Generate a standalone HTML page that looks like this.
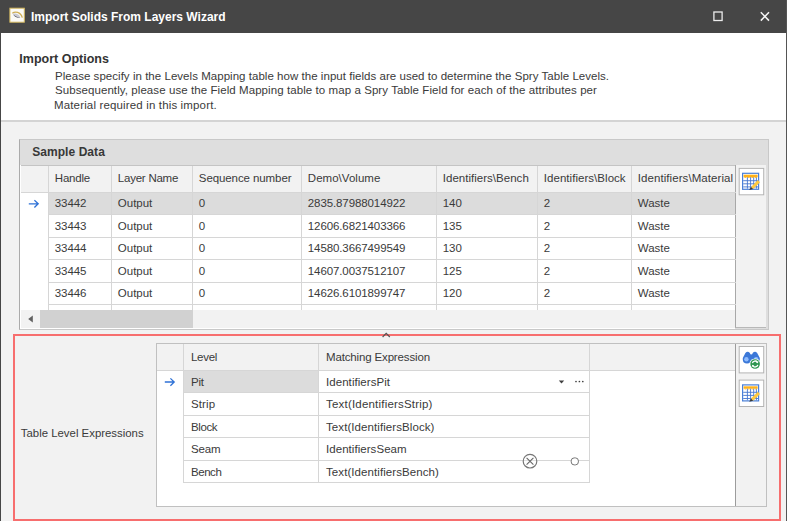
<!DOCTYPE html>
<html><head><meta charset="utf-8"><title>Import Solids From Layers Wizard</title>
<style>
html,body{margin:0;padding:0;}
body{width:789px;height:521px;overflow:hidden;background:#f2f2f2;position:relative;font-family:"Liberation Sans",sans-serif;font-size:11.5px;color:#3a3a3a;}
div,span{position:absolute;box-sizing:border-box;white-space:nowrap;}
.t{line-height:14px;height:14px;}
.b{font-weight:bold;}
#titlebar{left:0;top:0;width:787px;height:33px;background:#464646;}
#lb{left:0;top:0;width:1.2px;height:521px;background:#464646;}
#rb{left:786px;top:0;width:1.3px;height:521px;background:#555;}
#rw{left:787.4px;top:0;width:2px;height:521px;background:#fff;}
#head{left:1px;top:33px;width:785px;height:88px;background:#fff;}
#sep{left:1px;top:120px;width:785px;height:2px;background:#d4d4d4;}
.hl{background:#d6d6d6;height:1px;}
.vl{background:#d6d6d6;width:1px;}
.cell{height:14px;line-height:14px;}
</style></head><body>
<div id="titlebar"></div>
<div id="lb"></div><div id="rb"></div><div id="rw"></div>
<div id="head"></div>
<div id="sep"></div>

<span class="t b" id="ttl" style="left:31px;top:9.7px;font-size:12px;color:#fff;">Import Solids From Layers Wizard</span>

<span class="t b" id="io" style="left:19.3px;top:51.6px;font-size:12.5px;color:#333;">Import Options</span>
<span class="t" id="l1" style="left:55px;top:68.8px;letter-spacing:0.036px;">Please specify in the Levels Mapping table how the input fields are used to determine the Spry Table Levels.</span>
<span class="t" id="l2" style="left:55px;top:83.3px;letter-spacing:0.076px;">Subsequently, please use the Field Mapping table to map a Spry Table Field for each of the attributes per</span>
<span class="t" id="l3" style="left:54px;top:98px;letter-spacing:0.15px;">Material required in this import.</span>

<!-- Sample data group -->
<div id="grp" style="left:19px;top:139.2px;width:749.6px;height:190.6px;background:#dedede;border:1.2px solid #c8c8c8;border-left-color:#ababab;"></div>
<span class="t b" id="sd" style="left:32.2px;top:144.5px;font-size:12px;letter-spacing:0.06px;color:#383838;">Sample Data</span>
<div id="g1pad" style="left:20.2px;top:165px;width:715.3px;height:164.2px;background:#fff;"></div>
<div id="g1" style="left:21px;top:165px;width:714.5px;height:144.5px;background:#fff;"></div>
<div id="g1h" style="left:21px;top:165px;width:714.5px;height:27px;background:#f2f2f2;border-top:1px solid #c4c4c4;"></div>
<div id="g1sel" style="left:48px;top:192px;width:687.5px;height:22.5px;background:#dcdcdc;"></div>
<div id="g1sb" style="left:21px;top:309.5px;width:714.5px;height:18.5px;background:#f2f2f2;"></div>
<div id="g1thumb" style="left:40px;top:309.5px;width:152.6px;height:18.3px;background:#d1d1d1;"></div>
<div id="side1" style="left:735px;top:165px;width:30.8px;height:163px;background:#f2f2f2;border-left:1px solid #a8a8a8;border-bottom:1px solid #b8b8b8;"></div>

<div id="cont1">
<div class="vl" style="left:48px;top:166px;height:143.5px;"></div>
<div class="vl" style="left:111px;top:166px;height:143.5px;"></div>
<div class="vl" style="left:192px;top:166px;height:143.5px;"></div>
<div class="vl" style="left:301px;top:166px;height:143.5px;"></div>
<div class="vl" style="left:436px;top:166px;height:143.5px;"></div>
<div class="vl" style="left:537px;top:166px;height:143.5px;"></div>
<div class="vl" style="left:631px;top:166px;height:143.5px;"></div>
<div class="hl" style="left:21px;top:191.7px;width:714.5px;"></div>
<div class="hl" style="left:48px;top:214px;width:687.5px;"></div>
<div class="hl" style="left:48px;top:236.5px;width:687.5px;"></div>
<div class="hl" style="left:48px;top:259px;width:687.5px;"></div>
<div class="hl" style="left:48px;top:281.5px;width:687.5px;"></div>
<div class="hl" style="left:48px;top:304px;width:687.5px;"></div>
<span class="t" id="h0" style="left:54.8px;top:171.2px;letter-spacing:-0.2px;">Handle</span>
<span class="t" id="h1" style="left:117.8px;top:171.2px;letter-spacing:-0.23px;">Layer Name</span>
<span class="t" id="h2" style="left:198.8px;top:171.2px;letter-spacing:-0.09px;">Sequence number</span>
<span class="t" id="h3" style="left:307.8px;top:171.2px;letter-spacing:0.03px;">Demo\Volume</span>
<span class="t" id="h4" style="left:442.8px;top:171.2px;letter-spacing:0.02px;">Identifiers\Bench</span>
<span class="t" id="h5" style="left:543.8px;top:171.2px;letter-spacing:0.04px;">Identifiers\Block</span>
<span class="t" id="h6" style="left:637.8px;top:171.2px;letter-spacing:0.07px;">Identifiers\Material</span>
<span class="t" id="r0c0" style="left:54.8px;top:196.4px;letter-spacing:-0.1px;">33442</span>
<span class="t" id="r0c1" style="left:117.8px;top:196.4px;">Output</span>
<span class="t" id="r0c2" style="left:198.8px;top:196.4px;letter-spacing:-0.1px;">0</span>
<span class="t" id="r0c3" style="left:307.8px;top:196.4px;letter-spacing:-0.1px;">2835.87988014922</span>
<span class="t" id="r0c4" style="left:442.8px;top:196.4px;letter-spacing:-0.1px;">140</span>
<span class="t" id="r0c5" style="left:543.8px;top:196.4px;letter-spacing:-0.1px;">2</span>
<span class="t" id="r0c6" style="left:637.8px;top:196.4px;">Waste</span>
<span class="t" id="r1c0" style="left:54.8px;top:218.9px;letter-spacing:-0.1px;">33443</span>
<span class="t" id="r1c1" style="left:117.8px;top:218.9px;">Output</span>
<span class="t" id="r1c2" style="left:198.8px;top:218.9px;letter-spacing:-0.1px;">0</span>
<span class="t" id="r1c3" style="left:307.8px;top:218.9px;letter-spacing:-0.1px;">12606.6821403366</span>
<span class="t" id="r1c4" style="left:442.8px;top:218.9px;letter-spacing:-0.1px;">135</span>
<span class="t" id="r1c5" style="left:543.8px;top:218.9px;letter-spacing:-0.1px;">2</span>
<span class="t" id="r1c6" style="left:637.8px;top:218.9px;">Waste</span>
<span class="t" id="r2c0" style="left:54.8px;top:241.4px;letter-spacing:-0.1px;">33444</span>
<span class="t" id="r2c1" style="left:117.8px;top:241.4px;">Output</span>
<span class="t" id="r2c2" style="left:198.8px;top:241.4px;letter-spacing:-0.1px;">0</span>
<span class="t" id="r2c3" style="left:307.8px;top:241.4px;letter-spacing:-0.1px;">14580.3667499549</span>
<span class="t" id="r2c4" style="left:442.8px;top:241.4px;letter-spacing:-0.1px;">130</span>
<span class="t" id="r2c5" style="left:543.8px;top:241.4px;letter-spacing:-0.1px;">2</span>
<span class="t" id="r2c6" style="left:637.8px;top:241.4px;">Waste</span>
<span class="t" id="r3c0" style="left:54.8px;top:263.9px;letter-spacing:-0.1px;">33445</span>
<span class="t" id="r3c1" style="left:117.8px;top:263.9px;">Output</span>
<span class="t" id="r3c2" style="left:198.8px;top:263.9px;letter-spacing:-0.1px;">0</span>
<span class="t" id="r3c3" style="left:307.8px;top:263.9px;letter-spacing:-0.1px;">14607.0037512107</span>
<span class="t" id="r3c4" style="left:442.8px;top:263.9px;letter-spacing:-0.1px;">125</span>
<span class="t" id="r3c5" style="left:543.8px;top:263.9px;letter-spacing:-0.1px;">2</span>
<span class="t" id="r3c6" style="left:637.8px;top:263.9px;">Waste</span>
<span class="t" id="r4c0" style="left:54.8px;top:286.4px;letter-spacing:-0.1px;">33446</span>
<span class="t" id="r4c1" style="left:117.8px;top:286.4px;">Output</span>
<span class="t" id="r4c2" style="left:198.8px;top:286.4px;letter-spacing:-0.1px;">0</span>
<span class="t" id="r4c3" style="left:307.8px;top:286.4px;letter-spacing:-0.1px;">14626.6101899747</span>
<span class="t" id="r4c4" style="left:442.8px;top:286.4px;letter-spacing:-0.1px;">120</span>
<span class="t" id="r4c5" style="left:543.8px;top:286.4px;letter-spacing:-0.1px;">2</span>
<span class="t" id="r4c6" style="left:637.8px;top:286.4px;">Waste</span>
</div><!--e1-->

<!-- red box -->
<div id="redl" style="left:13px;top:334.1px;width:2px;height:187px;background:#f76e6e;"></div>
<div id="redt" style="left:13px;top:334.1px;width:767.7px;height:1.7px;background:#f76e6e;"></div>
<div id="redr" style="left:779.1px;top:334.1px;width:1.6px;height:187px;background:#f76e6e;"></div>
<div id="redb" style="left:13px;top:519px;width:767.7px;height:2px;background:#f76e6e;"></div>

<span class="t" id="tle" style="left:20.8px;top:425.6px;font-size:11.4px;">Table Level Expressions</span>

<div id="g2" style="left:156px;top:343px;width:611px;height:164px;background:#fff;border:1px solid #c0c0c0;"></div>
<div id="g2h" style="left:157px;top:344px;width:578px;height:26px;background:#f2f2f2;"></div>
<div id="g2sel" style="left:184px;top:370px;width:135px;height:22px;background:#dcdcdc;"></div>
<div id="side2" style="left:734.8px;top:344px;width:31.2px;height:162px;background:#f2f2f2;border-left:1.3px solid #9c9c9c;"></div>
<div id="cont2">
<div class="vl" style="left:183.1px;top:344px;height:139px;"></div>
<div class="vl" style="left:318.1px;top:344px;height:139px;"></div>
<div class="vl" style="left:589.1px;top:344px;height:139px;"></div>
<div class="hl" style="left:157px;top:369.5px;width:578px;"></div>
<div class="hl" style="left:184px;top:392px;width:406px;"></div>
<div class="hl" style="left:184px;top:414.5px;width:406px;"></div>
<div class="hl" style="left:184px;top:437px;width:406px;"></div>
<div class="hl" style="left:184px;top:459.5px;width:406px;"></div>
<div class="hl" style="left:184px;top:482px;width:406px;"></div>
<span class="t" id="gh0" style="left:191px;top:349.6px;letter-spacing:-0.3px;">Level</span>
<span class="t" id="gh1" style="left:326px;top:349.6px;letter-spacing:-0.15px;">Matching Expression</span>
<span class="t" id="lv0" style="left:191px;top:374.8px;letter-spacing:-0.2px;">Pit</span>
<span class="t" id="ex0" style="left:326px;top:374.8px;letter-spacing:0.06px;">IdentifiersPit</span>
<span class="t" id="lv1" style="left:191px;top:397.3px;letter-spacing:0.1px;">Strip</span>
<span class="t" id="ex1" style="left:326px;top:397.3px;letter-spacing:0.2px;">Text(IdentifiersStrip)</span>
<span class="t" id="lv2" style="left:191px;top:419.8px;letter-spacing:-0.38px;">Block</span>
<span class="t" id="ex2" style="left:326px;top:419.8px;letter-spacing:0.08px;">Text(IdentifiersBlock)</span>
<span class="t" id="lv3" style="left:191px;top:442.3px;letter-spacing:-0.15px;">Seam</span>
<span class="t" id="ex3" style="left:326px;top:442.3px;letter-spacing:0.05px;">IdentifiersSeam</span>
<span class="t" id="lv4" style="left:191px;top:464.8px;letter-spacing:-0.45px;">Bench</span>
<span class="t" id="ex4" style="left:326px;top:464.8px;letter-spacing:0.08px;">Text(IdentifiersBench)</span>
</div><!--e2-->
<svg id="ov" style="position:absolute;left:0;top:0" width="789" height="521" viewBox="0 0 789 521">
<!-- title icon -->
<rect x="9.9" y="8.2" width="14.4" height="14" fill="#fbfaf6" stroke="#d6b95e" stroke-width="1"/>
<path d="M12.3 13.2 C15 11.2 20.5 11.5 22.3 17.6" stroke="#cfae55" stroke-width="1.3" fill="none"/>
<path d="M12.6 13.6 C15.5 13 19.5 14 20.3 17.8 C16.5 18.2 14 16.5 12.6 13.6 Z" fill="#c9c9d2"/>
<path d="M13.2 14.6 C15 17 17.5 18.3 20.3 17.8 C18 17.6 15.3 16.5 13.2 14.6 Z" fill="#3a3a44"/>
<!-- window buttons -->
<rect x="713.9" y="12" width="8.2" height="8.5" fill="none" stroke="#ececec" stroke-width="1.3"/>
<path d="M760.8 12.3 L769 20.6 M769 12.3 L760.8 20.6" stroke="#f4f4f4" stroke-width="1.5" fill="none"/>
<!-- scrollbar arrow -->
<path d="M32.8 315.6 L28.2 319 L32.8 322.4 Z" fill="#606060"/>
<!-- splitter caret -->
<path d="M382.6 337 L386.2 333.4 L389.8 337" stroke="#555" stroke-width="1.2" fill="none"/>
<!-- row indicators -->
<path d="M28.8 203.8 H38 M34.4 200.2 L38.2 203.8 L34.4 207.5" stroke="#2f72d6" stroke-width="1.3" fill="none"/>
<path d="M164.8 382 H174 M170.4 378.4 L174.2 382 L170.4 385.7" stroke="#2f72d6" stroke-width="1.3" fill="none"/>
<!-- side buttons -->
<rect x="739.2" y="168.4" width="24.5" height="26.4" fill="#fff" stroke="#b4b4b4" stroke-width="1"/>
<g transform="translate(742,172.7)">
<rect x="0.6" y="0.6" width="16" height="16" fill="#fff" stroke="#4a80d8" stroke-width="1.2"/>
<rect x="1.6" y="2" width="14" height="2.4" fill="#ffb21a"/>
<path d="M5.4 4.4V16 M8.6 4.4V16 M11.7 4.4V16 M14.4 4.4V16 M1.2 8H16 M1.2 11.1H16 M1.2 14.2H16" stroke="#4576cf" stroke-width="0.9" fill="none"/>
<path d="M1.6 4.4 h14 l-1.75 0.9 l-1.75 -0.9 l-1.75 0.9 l-1.75 -0.9 l-1.75 0.9 l-1.75 -0.9 l-1.75 0.9 Z" fill="#ffb21a"/>
<path d="M9 14.2 L15.8 7.4 L18 9.6 L11.2 16.4 Z" fill="#ffc940"/>
<path d="M9 14.2 L11.2 16.4 L7.2 17.4 Z" fill="#3a3a3a"/>
</g>
<rect x="739.2" y="346.5" width="24.5" height="26.4" fill="#fff" stroke="#b4b4b4" stroke-width="1"/>
<rect x="739.2" y="380.1" width="24.5" height="26.4" fill="#fff" stroke="#b4b4b4" stroke-width="1"/>
<g transform="translate(742,384.3)">
<rect x="0.6" y="0.6" width="16" height="16" fill="#fff" stroke="#4a80d8" stroke-width="1.2"/>
<rect x="1.6" y="2" width="14" height="2.4" fill="#ffb21a"/>
<path d="M5.4 4.4V16 M8.6 4.4V16 M11.7 4.4V16 M14.4 4.4V16 M1.2 8H16 M1.2 11.1H16 M1.2 14.2H16" stroke="#4576cf" stroke-width="0.9" fill="none"/>
<path d="M1.6 4.4 h14 l-1.75 0.9 l-1.75 -0.9 l-1.75 0.9 l-1.75 -0.9 l-1.75 0.9 l-1.75 -0.9 l-1.75 0.9 Z" fill="#ffb21a"/>
<path d="M9 14.2 L15.8 7.4 L18 9.6 L11.2 16.4 Z" fill="#ffc940"/>
<path d="M9 14.2 L11.2 16.4 L7.2 17.4 Z" fill="#3a3a3a"/>
</g>
<!-- binoculars -->
<g fill="#3b78d8">
<path d="M745.4 353 Q747.6 350.6 749.9 353 L751.2 356.5 V359.4 A4.2 4 0 0 1 742.8 359.4 V358 Z"/>
<path d="M757.2 353 Q755 350.6 752.7 353 L751.4 356.5 V359.4 A4.2 4 0 0 0 759.8 359.4 V358 Z"/>
<rect x="749" y="354.4" width="4.6" height="5"/>
</g>
<circle cx="746.4" cy="359.3" r="2.2" fill="#8fbcff"/>
<circle cx="756.2" cy="359.3" r="2.2" fill="#8fbcff"/>
<circle cx="755.1" cy="364" r="5.6" fill="#fff"/>
<circle cx="755.1" cy="364" r="4.8" fill="#2f9650"/>
<path d="M752.4 363.2 A2.8 2.8 0 0 1 757.4 362.2 M757.8 364.8 A2.8 2.8 0 0 1 752.8 365.8" stroke="#fff" stroke-width="1.3" fill="none"/>
<path d="M758.4 361 L758 363.2 L755.9 362.6 Z M751.8 367 L752.2 364.8 L754.3 365.4 Z" fill="#fff"/>
<!-- dropdown + ellipsis -->
<path d="M558.8 380.4 H564.2 L561.5 383.6 Z" fill="#404040"/>
<circle cx="576" cy="381.5" r="0.85" fill="#404040"/><circle cx="579.4" cy="381.5" r="0.85" fill="#404040"/><circle cx="582.8" cy="381.5" r="0.85" fill="#404040"/>
<!-- cursor -->
<circle cx="530" cy="461.2" r="6.8" fill="#fff" fill-opacity="0.3" stroke="#777" stroke-width="1.2"/>
<path d="M526.6 457.8 L533.4 464.6 M533.4 457.8 L526.6 464.6" stroke="#666" stroke-width="1.1"/>
<rect x="571.2" y="457.9" width="7.2" height="7" rx="3" ry="3" fill="#fff" stroke="#777" stroke-width="1"/>
</svg>
</body></html>
